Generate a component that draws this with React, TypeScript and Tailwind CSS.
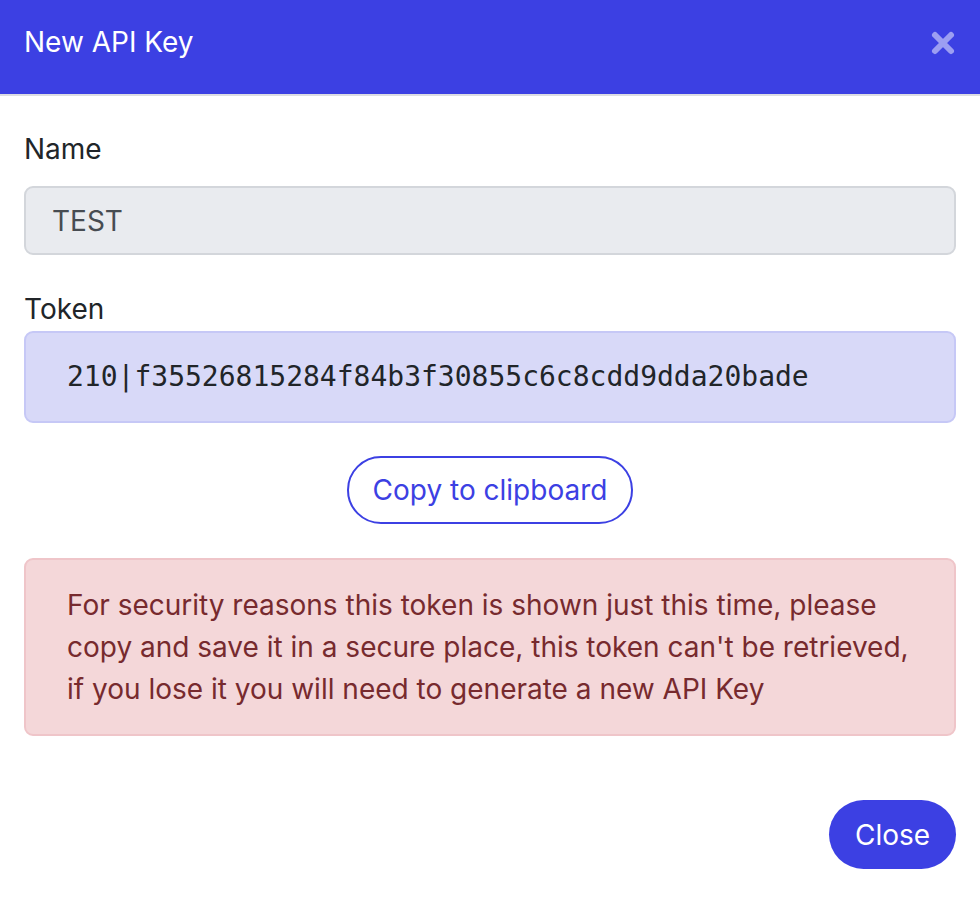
import { useState } from "react";

export default function App() {
  const [copied, setCopied] = useState(false);
  const token = "210|f35526815284f84b3f30855c6c8cdd9dda20bade";

  return (
    <div className="w-[980px] h-[900px] bg-white text-[#212529] font-['Inter',sans-serif] text-[28px] leading-[42px]">
      {/* Header */}
      <div className="h-[96px] bg-[#3c40e3] border-b-2 border-[#dcdde3] flex items-start justify-between pl-6 pr-[24px] pt-[21px]">
        <h5 className="text-white text-[28px] leading-[42px] font-normal">New API Key</h5>
        <button className="mt-[9px] text-[#9c9ef2]" aria-label="Close">
          <svg width="26" height="26" viewBox="0 0 26 26">
            <path d="M5 5 L21 21 M21 5 L5 21" stroke="currentColor" strokeWidth="6" strokeLinecap="round" />
          </svg>
        </button>
      </div>

      {/* Body */}
      <div className="px-6 pt-[32px]">
        <label className="block">Name</label>
        <div className="mt-[16px] h-[69px] rounded-[9px] border-2 border-[#d3d6db] bg-[#e9ebef] px-[26px] flex items-center text-[#474c52]">
          TEST
        </div>

        <label className="block mt-[33px]">Token</label>
        <div className="mt-[1px] h-[92px] rounded-[9px] border-2 border-[#c6c8f6] bg-[#d8d9f8] pl-[41px] flex items-center font-['DejaVu_Sans_Mono',monospace] text-[28px] text-[#212529]">
          {token}
        </div>

        <div className="flex justify-center mt-[33px]">
          <button
            onClick={() => setCopied(true)}
            className="h-[68px] w-[286px] rounded-full border-2 border-[#3c40e3] text-[#3c40e3] text-[28px]"
          >
            {copied ? "Copied!" : "Copy to clipboard"}
          </button>
        </div>

        <div className="mt-[34px] h-[178px] rounded-[9px] border-2 border-[#efc5c9] bg-[#f4d7d9] px-[41px] pt-[24px] text-[#772a2e]">
          For security reasons this token is shown just this time, please copy and save it in a secure place, this token can't be retrieved, if you lose it you will need to generate a new API Key
        </div>

        <div className="flex justify-end mt-[64px]">
          <button className="h-[69px] w-[127px] rounded-full bg-[#3c40e3] text-white text-[28px]">Close</button>
        </div>
      </div>
    </div>
  );
}
